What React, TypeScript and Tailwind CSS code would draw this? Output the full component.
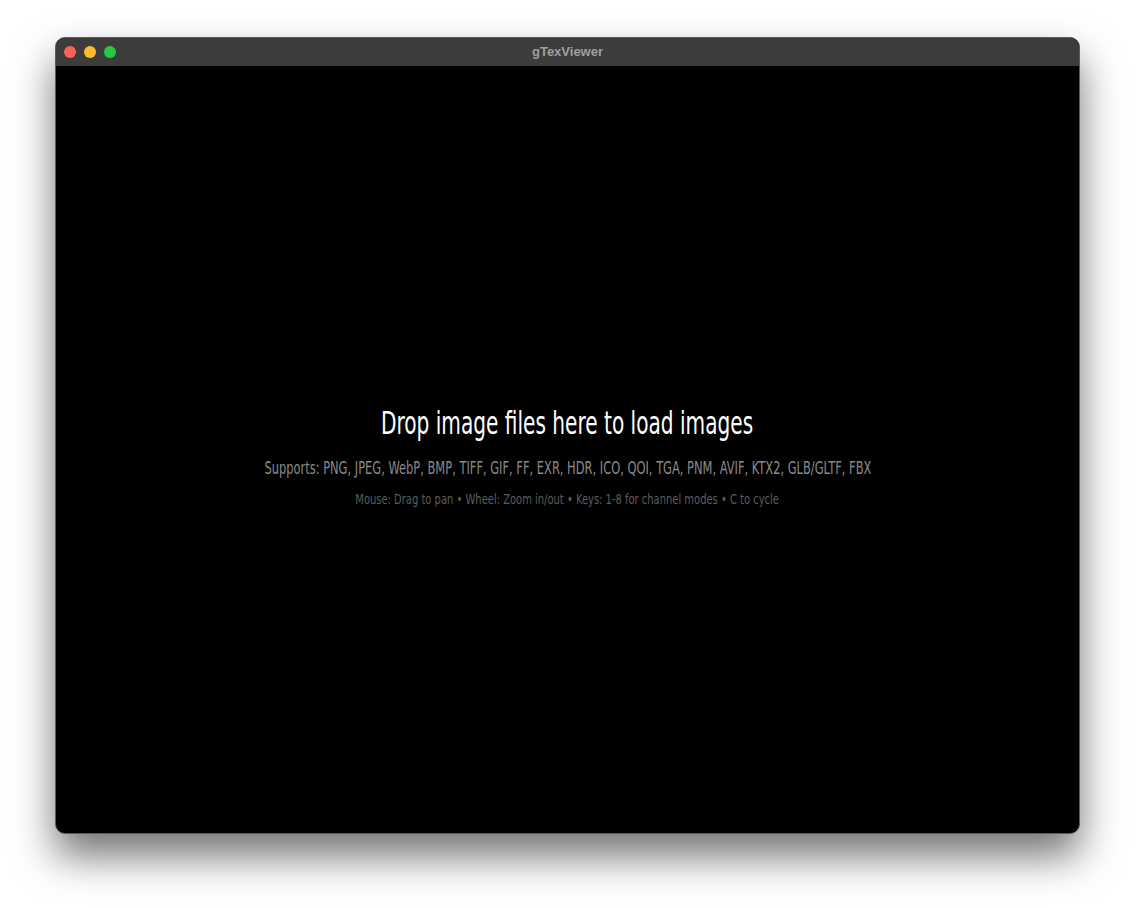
export default function App() {
  const narrow = { fontFamily: '"DejaVu Sans Condensed", "DejaVu Sans", sans-serif' };
  return (
    <div className="w-[1136px] h-[908px] bg-white pt-[37px] pl-[55px]">
      <div className="w-[1025px] h-[797px] rounded-[10px] border border-[#5a5a5a] bg-black overflow-hidden flex flex-col shadow-[0_22px_40px_rgba(0,0,0,0.55)]">
        <div className="h-[28px] bg-[#3c3c3c] flex items-center relative shrink-0">
          <div className="flex gap-[8px] pl-[8px]">
            <span className="w-[12px] h-[12px] rounded-full bg-[#ff5f57]" />
            <span className="w-[12px] h-[12px] rounded-full bg-[#febc2e]" />
            <span className="w-[12px] h-[12px] rounded-full bg-[#28c840]" />
          </div>
          <div className="absolute inset-0 flex items-center justify-center text-[13px] font-bold text-[#a0a0a0]" style={{ fontFamily: '"Liberation Sans", Arial, sans-serif' }}>
            gTexViewer
          </div>
        </div>
        <div className="flex-1 flex flex-col items-center justify-center pt-[13px] whitespace-nowrap" style={narrow}>
          <div className="text-[31.5px] text-white leading-[36px] scale-x-[0.71]">Drop image files here to load images</div>
          <div className="text-[17.8px] text-[#8a8a8a] mt-[17px] leading-[20px] scale-x-[0.716]">Supports: PNG, JPEG, WebP, BMP, TIFF, GIF, FF, EXR, HDR, ICO, QOI, TGA, PNM, AVIF, KTX2, GLB/GLTF, FBX</div>
          <div className="text-[14px] text-[#5c5c5c] mt-[12px] leading-[18px] scale-x-[0.79]">Mouse: Drag to pan • Wheel: Zoom in/out • Keys: 1-8 for channel modes • C to cycle</div>
        </div>
      </div>
    </div>
  );
}
